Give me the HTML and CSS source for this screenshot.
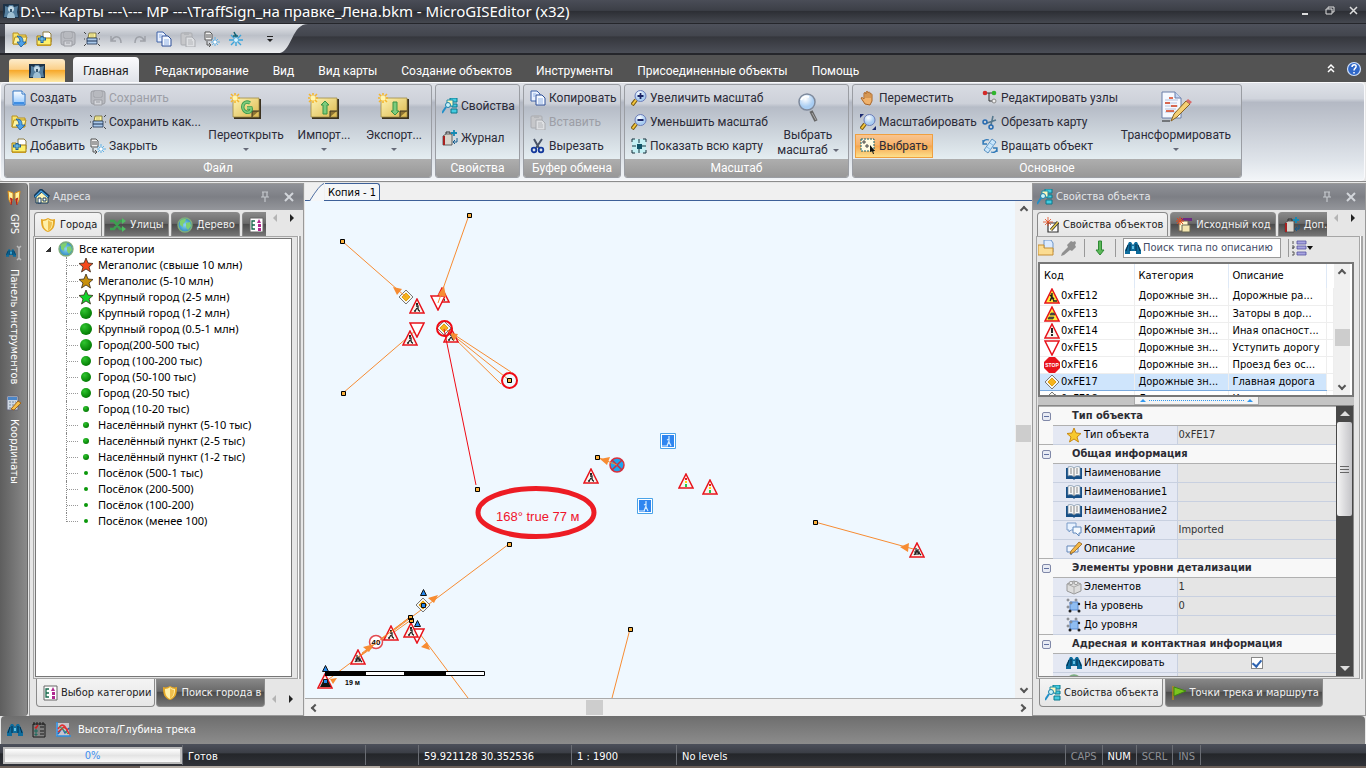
FILE: index.html
```html
<!DOCTYPE html>
<html lang="ru">
<head>
    <meta charset="UTF-8">
    <meta name="viewport" content="width=device-width, initial-scale=1.0">
    <title>MicroGISEditor</title>
    <link rel="stylesheet" href="styles.css">
</head>
<body>
    <!-- icon set -->
    <svg class="defs" aria-hidden="true">
        <defs>
            <linearGradient id="blueDoc" x1="0" y1="0" x2="0" y2="1"><stop offset="0" stop-color="#fff"/><stop offset="1" stop-color="#8cc4ff"/></linearGradient>
            <linearGradient id="noteFill" x1="0" y1="0" x2="1" y2="1"><stop offset="0" stop-color="#fdf3b4"/><stop offset="1" stop-color="#dcb94e"/></linearGradient>
            <radialGradient id="glass" cx=".4" cy=".3"><stop offset="0" stop-color="#fff"/><stop offset="1" stop-color="#a9cdf2"/></radialGradient>
            <radialGradient id="globeFill" cx=".5" cy=".5"><stop offset="0" stop-color="#8fd6f2"/><stop offset="1" stop-color="#2f8bc0"/></radialGradient>
        </defs>
        <symbol id="i-logo" viewBox="0 0 16 16"><path fill="#1d3247" d="M0 1h16v14H0z"/><path fill="#557f9f" d="M2 3l3 1 1-2h4l1 2 4-1-1 6 1 5H1l1-5z"/><circle cx="8" cy="6" r="3" fill="#c5dbe8"/><path fill="#9fc0d4" d="M4 15c0-8 8-8 8 0z"/><path fill="#35546c" d="M7 6h2v3H7z"/></symbol>
        <symbol id="i-open" viewBox="0 0 16 16"><path d="M1 13V2h5l1 2h7v9z" fill="#f7e36a" stroke="#b8901c"/><path d="M3 6h12l-2 7H1z" fill="#fdf4a0" stroke="#b8901c"/><path d="M5 5c5 0 6 2 6 6h3l-5 5-4-5h3c0-3-1-4-3-6z" fill="#4ea1e8" stroke="#155a9c" stroke-width=".8"/></symbol>
        <symbol id="i-add" viewBox="0 0 16 16"><path d="M7 1h6l2 2v8H7z" fill="#fff" stroke="#8c7c40"/><path d="M1 14V5h4l1 2h9v7z" fill="#fdf06b" stroke="#a37b10"/><path d="M6 5v7M2 8h8" stroke="#1c5c98" stroke-width="3"/><path d="M6 6v5M3 8h6" stroke="#7fd4f4"/><path d="M1 14h14v1H1z" fill="#c79a20"/></symbol>
        <symbol id="i-save" viewBox="0 0 16 16"><rect x="1" y="1" width="14" height="13" rx="2" fill="#b9bbc1" stroke="#9b9da3"/><path d="M4 1h8v6H4zM4 10h8v5H4z" fill="#d3d5da" stroke="#9b9da3"/><path d="M5 3h6M5 5h6M6 12h4" stroke="#9b9da3"/></symbol>
        <symbol id="i-saveas" viewBox="0 0 16 16"><path d="M0 1l2 2M16 1l-2 2M0 15l2-2M16 15l-2-2M0 8h1M15 8h1" stroke="#222" stroke-width=".8"/><path d="M5 2h7v5H4z" fill="#fdf49a" stroke="#6d6432" stroke-width=".8"/><path d="M3 7h10v6H3z" fill="#a9c8ea" stroke="#1c3050" stroke-width=".8"/><path d="M3 10h10" stroke="#1c3050"/><path d="M6 4h4M6 6h4" stroke="#a49a60" stroke-width=".6"/></symbol>
        <symbol id="i-undo" viewBox="0 0 16 16"><path d="M3 5v5h5M4 9c3-5 9-4 9 3" fill="none" stroke="#9ea1a8" stroke-width="1.500"/></symbol>
        <symbol id="i-redo" viewBox="0 0 16 16"><path d="M13 5v5H8M12 9c-3-5-9-4-9 3" fill="none" stroke="#9ea1a8" stroke-width="1.500"/></symbol>
        <symbol id="i-copy" viewBox="0 0 16 16"><path d="M1 1h6l3 3v7H1z" fill="#e9f1ff" stroke="#3e62a8"/><path d="M6 5h6l3 3v7H6z" fill="#f5f9ff" stroke="#2c4f98"/><path d="M3 4h3M3 6h2M8 9h5M8 11h5M8 13h5" stroke="#8fb0e4"/></symbol>
        <symbol id="i-paste" viewBox="0 0 16 16"><rect x="1" y="2" width="11" height="12" rx="1" fill="#c6c7ca" stroke="#a9abb0"/><path d="M4 1h5v3H4z" fill="#b4b6ba"/><path d="M6 6h6l3 3v7H6z" fill="#dddfe2" stroke="#a9abb0"/><path d="M8 9h4M8 11h5M8 13h5" stroke="#b4b6ba"/></symbol>
        <symbol id="i-snow" viewBox="0 0 16 16"><path d="M8 3v12M1 9h14M3 4l10 10M13 4L3 14" stroke="#3aa5dc" stroke-width="1.400"/><circle cx="8" cy="9" r="2" fill="#d8f4ff"/><path d="M6 1l2 4M5 5h5" stroke="#14606e" stroke-width="1.500"/></symbol>
        <symbol id="i-closedoc" viewBox="0 0 16 16"><path d="M1 1h5l2 2v6H1z" fill="#f2f2f2" stroke="#555"/><path d="M2 4h5M2 6h5M3 10v4h4M5 12l2 2-2 2" stroke="#555" fill="none"/><path d="M11 6v9M7 11h9M8 8l6 6M14 8l-6 6" stroke="#62b2e6"/><circle cx="11" cy="11" r="1.500" fill="#fff"/></symbol>
        <symbol id="i-new" viewBox="0 0 16 16"><path d="M2 1h9l3 3v11H2z" fill="url(#blueDoc)" stroke="#2e74c4"/><path d="M11 1v3h3" fill="#fff" stroke="#2e74c4"/><path d="M3 13h10" stroke="#3e8ee4" stroke-width="2"/></symbol>
        <symbol id="i-note" viewBox="0 0 32 32"><path d="M4 8h27v20H4z" fill="#3a3120"/><path d="M3 7h26v19H3z" fill="url(#noteFill)" stroke="#a08b45" stroke-width=".8"/><path d="M22 26v-6h7" fill="#8d7433" stroke="#3a3120"/><path d="M5 2v10M0 7h10M1 3l8 8M9 3L1 11" stroke="#f5b52c" stroke-width="1.500"/><circle cx="5" cy="7" r="2.500" fill="#fff6b0"/></symbol>
        <symbol id="i-reopen" viewBox="0 0 32 32"><use href="#i-note" width="32" height="32"/><path d="M20 12c-7-4-10 6-4 9 3 1 6-1 5-4h-4" fill="none" stroke="#3b9a4d" stroke-width="3.500"/><path d="M20 12c-7-4-10 6-4 9 3 1 6-1 5-4h-4" fill="none" stroke="#7ccb7c" stroke-width="1.800"/></symbol>
        <symbol id="i-import" viewBox="0 0 32 32"><use href="#i-note" width="32" height="32"/><path d="M17 10l4 4h-2v9h-4v-9h-2z" fill="#7ccb7c" stroke="#3a9345"/></symbol>
        <symbol id="i-export" viewBox="0 0 32 32"><use href="#i-note" width="32" height="32"/><path d="M17 24l4-4h-2v-9h-4v9h-2z" fill="#7ccb7c" stroke="#3a9345"/></symbol>
        <symbol id="i-props" viewBox="0 0 16 16"><path d="M8 0h7v4H8zM10 6h5v3h-5zM9 11h6v4H9z" fill="#45cbe0" stroke="#0a788c"/><path d="M5 2h6v6H5z" fill="#fff7bc" stroke="#1c8fa8"/><circle cx="6" cy="7" r="2.500" fill="#c9f2fa" stroke="#1c7fa8"/><path d="M4 9l-4 6" stroke="#218fc8" stroke-width="2"/></symbol>
        <symbol id="i-journal" viewBox="0 0 16 16"><path d="M1 6l3-2h6v11H1z" fill="#d8d4cc" stroke="#444" stroke-width=".8"/><path d="M1 6h2v9H1z" fill="#a82020"/><path d="M4 4V2h4v2" fill="none" stroke="#333"/><path d="M12 0v6M9 3h6" stroke="#158ab4" stroke-width="1.800"/><path d="M15 8v4h-4M13 10l-2 2 2 2" fill="none" stroke="#125a8c"/></symbol>
        <symbol id="i-cut" viewBox="0 0 16 16"><path d="M4 1l5 9M12 1L6 10" stroke="#4a5468" stroke-width="2"/><circle cx="4" cy="12" r="2.300" fill="none" stroke="#12389c" stroke-width="1.800"/><circle cx="11" cy="12" r="2.300" fill="none" stroke="#12389c" stroke-width="1.800"/></symbol>
        <symbol id="i-lens" viewBox="0 0 16 16"><path d="M5 10l-4 5" stroke="#7a5a10" stroke-width="4"/><path d="M5 10l-3.500 4.500" stroke="#f4c73c" stroke-width="2"/><circle cx="9.500" cy="6" r="5.500" fill="url(#glass)" stroke="#6c7cb8"/></symbol>
        <symbol id="i-zoomin" viewBox="0 0 16 16"><use href="#i-lens" width="16" height="16"/><path d="M9.500 3v6M6.500 6h6" stroke="#1a2466" stroke-width="1.800"/></symbol>
        <symbol id="i-zoomout" viewBox="0 0 16 16"><use href="#i-lens" width="16" height="16"/><path d="M6.500 6h6" stroke="#1a2466" stroke-width="1.800"/></symbol>
        <symbol id="i-fit" viewBox="0 0 16 16"><path fill="#c4f0f4" d="M1 1h14v14H1z"/><path d="M1 4V1h3M12 1h3v3M15 12v3h-3M4 15H1v-3M8 1v4M8 11v4M1 8h4M11 8h4" stroke="#14303c" fill="none"/><path d="M6 6h5v5H6z" fill="#0d5468"/></symbol>
        <symbol id="i-biglens" viewBox="0 0 32 32"><path d="M19 20l5 10" stroke="#666" stroke-width="3.500"/><path d="M20 22l4 7" stroke="#aaa"/><circle cx="15" cy="11" r="8" fill="url(#glass)" stroke="#7f8a9c" stroke-width="1.500"/><path d="M9 9c2-4 6-4 8-3" fill="none" stroke="#fff" stroke-width="2"/></symbol>
        <symbol id="i-hand" viewBox="0 0 16 16"><path d="M5 14L1 8c1-1 2 0 3 1V3c1-1 2 0 2 1V2c1-1 2-1 2 1 1-2 2-1 2 1 1-1 2 0 2 1v6l-2 4z" fill="#f0b26c" stroke="#a86427"/><path d="M6 4v4M8 3v5M10 4v4" stroke="#a86427" stroke-width=".7"/></symbol>
        <symbol id="i-scale" viewBox="0 0 16 16"><path d="M0 0h4L0 4zM16 16h-4l4-4z" fill="#1b2a70"/><use href="#i-lens" width="16" height="16"/></symbol>
        <symbol id="i-select" viewBox="0 0 16 16"><path d="M1 1h13v12H1z" fill="#fffbe2" stroke="#14606e" stroke-dasharray="2 1"/><path d="M3 3h2v2H3zM6 7h2v2H6z" fill="none" stroke="#444"/><path d="M10 7l5 6-2 0 1 3-1 0-1-3-2 1z" fill="#111"/></symbol>
        <symbol id="i-nodes" viewBox="0 0 16 16"><path d="M4 3h7M7 3v8h4" fill="none" stroke="#333"/><circle cx="3" cy="3" r="2.300" fill="#d32a2a"/><circle cx="12" cy="3" r="2.300" fill="#2fb52f"/><circle cx="12" cy="11" r="2" fill="#eee" stroke="#888"/></symbol>
        <symbol id="i-crop" viewBox="0 0 16 16"><path d="M5 9l9-3M9 11l2-9" stroke="#55788e" stroke-width="1.600"/><circle cx="3" cy="8" r="2" fill="none" stroke="#256ab0" stroke-width="1.500"/><circle cx="9" cy="13" r="2" fill="none" stroke="#256ab0" stroke-width="1.500"/></symbol>
        <symbol id="i-rotate" viewBox="0 0 16 16"><path d="M10 1l4 3-8 11-4-3z" fill="#c9e6fb" stroke="#3b7bb4" stroke-width=".8"/><path d="M5 9l4 3M8 5l4 3" stroke="#7db4e0"/><path d="M1 6c0-4 3-5 6-4M15 10c0 4-3 5-6 4M1 2v4h4M15 14v-4h-4" fill="none" stroke="#2f79b8" stroke-width="1.300"/></symbol>
        <symbol id="i-transform" viewBox="0 0 32 32"><path d="M2 1h13l6 6v20H2z" fill="#f6f9ff" stroke="#6a7ea8"/><path d="M15 1v6h6" fill="#c5d6f2" stroke="#6a7ea8"/><path d="M5 9h13M5 12h12M5 15h13M5 18h11M5 21h13" stroke="#b4c2de"/><path d="M9 7h4M5 12h5M11 15h6M6 20h8" stroke="#d8401c" stroke-width="1.300"/><path d="M14 23L26 10l4 3-13 13-6 4z" fill="#f5cf74" stroke="#866022"/><path d="M26 10l2-2 4 3-2 2z" fill="#d76a6a"/><path d="M2 30h8" stroke="#222"/></symbol>
        <symbol id="i-help" viewBox="0 0 16 16"><circle cx="8" cy="8" r="6.500" fill="#2f67c8" stroke="#cfe0fa" stroke-width="1.200"/><path d="M6 6c0-3 5-3 4 0-.5 1.500-2 1.500-2 3.500M8 11v1.500" fill="none" stroke="#fff" stroke-width="1.500"/></symbol>
        <symbol id="i-house" viewBox="0 0 16 16"><path d="M2 8v6h12V8L8 3z" fill="#fff6b6" stroke="#143a5c"/><path d="M0 8l7-7 8 7" fill="none" stroke="#143a5c" stroke-width="3"/><path d="M1 8l6-6 7 6" fill="none" stroke="#48a7e8" stroke-width="1.200"/><path d="M4 9h3v5H4zM9 9h3v3H9z" fill="#fff" stroke="#143a5c"/></symbol>
        <symbol id="i-shield" viewBox="0 0 16 16"><path d="M1 2c3 1 5 0 7-1 2 1 4 2 7 1 0 7-1 11-7 13C2 13 1 9 1 2z" fill="#e5a827"/><path d="M3 4c2 0 4-1 5-2 1 1 3 2 5 2 0 5-1 8-5 10-4-2-5-5-5-10z" fill="#fff0a8"/><path d="M8 3v11c3-2 4-5 4-9-1 0-3-1-4-2z" fill="#efc04e"/></symbol>
        <symbol id="i-shuffle" viewBox="0 0 16 16"><path d="M0 4h4l6 8h3M0 12h4l6-8h3" fill="none" stroke="#3c9f50" stroke-width="2.600"/><path d="M12 1l4 3-4 3zM12 9l4 3-4 3z" fill="#4fbd62"/></symbol>
        <symbol id="i-globe" viewBox="0 0 16 16"><circle cx="8" cy="8" r="7" fill="url(#globeFill)" stroke="#7fae7c" stroke-width="1.400"/><path d="M3 4c2-2 4-2 6-2l-1 3-2 2v3l-3-2zM9 6l4-1 1 4-3 4-2-3z" fill="#7fd070"/></symbol>
        <symbol id="i-cat" viewBox="0 0 16 16"><path d="M2 1h13v14H2z" fill="#fff" stroke="#666"/><path d="M7 4H4v8h3M4 8h3" fill="none" stroke="#176a4c" stroke-width="1.300"/><path d="M9 6l2-4 2 4zM10 7h3v3h-3zM10 11h3v3h-3z" fill="#b02a90"/></symbol>
        <symbol id="i-binoc" viewBox="0 0 16 16"><path d="M4 2h2l2 3 2-3h2l4 8v4h-5v-3H5v3H0v-4z" fill="#0e6c9c"/><path d="M3 5l-2 6M5 4v7M13 5l2 6M11 4v7" stroke="#052f4c"/><path d="M7 6h2v3H7z" fill="#64c0e4"/></symbol>
        <symbol id="i-starlet" viewBox="0 0 16 16"><path d="M8 1l2 5 5 .5-4 3.500 1.500 5L8 12l-4.500 3L5 10 1 6.500 6 6z" stroke="#3a2c1a" stroke-width=".8"/></symbol>
        <symbol id="i-star" viewBox="0 0 16 16"><path d="M8 1l2 5 5 .5-4 3.500 1.500 5L8 12l-4.500 3L5 10 1 6.500 6 6z" fill="#f7c92e" stroke="#c98a14"/></symbol>
        <symbol id="i-book" viewBox="0 0 16 16"><path d="M0 3h16v11H9l-1 1-1-1H0z" fill="#164f86"/><path d="M2 2c3-1 5 0 6 1 1-1 3-2 6-1v9c-3-1-5 0-6 1-1-1-3-2-6-1z" fill="#f7f7f7" stroke="#6d87a0" stroke-width=".7"/><path d="M8 3v9M4 4h2M4 6h2M4 8h2M10 4h2M10 6h2M10 8h2" stroke="#888"/></symbol>
        <symbol id="i-comment" viewBox="0 0 16 16"><path d="M1 1h9v7H5l-2 2V8H1z" fill="#e8f2ff" stroke="#7a9cc8"/><path d="M7 5h8v6h-2v3l-3-3H7z" fill="#f5faff" stroke="#5f88bc"/></symbol>
        <symbol id="i-descr" viewBox="0 0 16 16"><path d="M1 5h11v6H7l-2 3v-3H1z" fill="#f0f6ff" stroke="#6487b8"/><path d="M5 10L13 1l3 2-8 8-4 2z" fill="#f4b847" stroke="#94611a" stroke-width=".8"/></symbol>
        <symbol id="i-brick" viewBox="0 0 16 16"><path d="M1 5l7-3 7 3v7l-7 3-7-3z" fill="#ddd" stroke="#999"/><path d="M1 5l7 3 7-3M8 8v7" fill="none" stroke="#aaa"/><ellipse cx="5" cy="4" rx="2" ry="1.500" fill="#f3f3f3" stroke="#999"/><ellipse cx="10" cy="4" rx="2" ry="1.500" fill="#f3f3f3" stroke="#999"/></symbol>
        <symbol id="i-level" viewBox="0 0 16 16"><path d="M4 4h8v8H4z" fill="#8fbdf2" stroke="#5a8ad0"/><g fill="#dce6f6" stroke="#555" stroke-width=".7"><circle cx="2" cy="2" r="1"/><circle cx="10" cy="2" r="1"/><circle cx="2" cy="9" r="1"/><circle cx="5" cy="5" r="1"/></g><g fill="#222"><circle cx="4" cy="13" r="1.500"/><circle cx="13" cy="13" r="1.500"/><circle cx="13" cy="6" r="1.200"/></g></symbol>
        <symbol id="i-folder" viewBox="0 0 16 16"><path d="M6 0h7l2 3v9H6z" fill="#dcebff" stroke="#6a94c8"/><path d="M0 5h6v3h9v7H0z" fill="#fbdc92" stroke="#c48d32"/></symbol>
        <symbol id="i-plug" viewBox="0 0 16 16"><path d="M0 16l1-3 6-6-1-2 4-4 2 1 2-1 1 2-1 2 1 2-4 4-2-1-6 5z" fill="#909090"/></symbol>
        <symbol id="i-down" viewBox="0 0 16 16"><path d="M8 15l4-5H9.500V1h-3v9H4z" fill="#5db85a" stroke="#2f8b35"/></symbol>
        <symbol id="i-sort" viewBox="0 0 24 16"><path d="M2 1v3M1 6h2v2H1h2M1 12h2v3H1" fill="none" stroke="#555"/><path d="M6 1h9v3H6zM6 6h9v3H6zM6 12h9v3H6z" fill="#a8a5e0" stroke="#5450a0" stroke-width=".8"/><path d="M16 6h6l-3 4z" fill="#111"/></symbol>
        <symbol id="i-edit" viewBox="0 0 16 16"><path d="M5 6h10v9H5z" fill="#fff" stroke="#333" stroke-width="1.200"/><path d="M8 13l7-8" stroke="#333" stroke-width="3"/><path d="M8 13l7-8" stroke="#e8cc4c" stroke-width="1.500"/><path d="M5 0v9M0 5h10M2 2l6 6M8 2L2 8" stroke="#e2491c" stroke-width=".8"/></symbol>
        <symbol id="i-source" viewBox="0 0 16 16"><path d="M5 1h11v3H5z" fill="#6a2b80"/><path d="M3 4h9v10H3z" fill="#fff8cc" stroke="#765"/><path d="M6 8h8v7H6z" fill="#f4e6b0" stroke="#665"/><path d="M4 0v8M0 4h8M1 1l6 6M7 1L1 7" stroke="#e2491c"/></symbol>
        <symbol id="i-flag" viewBox="0 0 16 16"><path d="M2 1v14" stroke="#b38b1c" stroke-width="1.500"/><path d="M3 2l12 4-12 5z" fill="#7bc51f" stroke="#3f8a10"/></symbol>
        <symbol id="i-notes" viewBox="0 0 16 16"><path d="M2 2h12v13H2z" fill="none" stroke="#1a1a1a"/><path d="M3 0v3M6 0v3M9 0v3M12 0v3M9 5h4M9 9h4M9 12h4" stroke="#1a1a1a"/><path d="M4 5l1 1 2-3" stroke="#d02020" fill="none" stroke-width="1.500"/><path d="M4 8h2v2H4zM4 12h2v1H4z" fill="none" stroke="#176a5c"/></symbol>
        <symbol id="i-graph" viewBox="0 0 16 16"><path d="M1 1h13v13H1z" fill="#c9c4cc"/><path d="M2 0v14h14" fill="none" stroke="#2c8fe0" stroke-width="1.600"/><path d="M3 12l4-6 3 5 4-5" stroke="#2464b8" fill="none" stroke-width="1.400"/><path d="M3 7c4-7 7-4 11 5M3 10l6-5 4 3" stroke="#e03131" fill="none" stroke-width="1.600"/><path d="M4 4l9 8" stroke="#44a844"/></symbol>
        <symbol id="i-gps" viewBox="0 0 16 16"><path d="M2 1l5 2v5l-2 6-2-4zM14 1L9 3v5l2 6 2-4z" fill="#fff3a0" stroke="#d88a18"/><path d="M4 8l2 1-1 6M12 8l-2 1 1 6" fill="#c92222" stroke="#b01c1c"/></symbol>
        <symbol id="i-tools" viewBox="0 0 16 16"><use href="#i-binoc" width="10" height="16"/><path d="M11 1l2 2 2-2M13 3v10M11 15l2-2 2 2" fill="none" stroke="#bbb" stroke-width="1.500"/></symbol>
        <symbol id="i-calc" viewBox="0 0 16 16"><path d="M1 1h11v14H1z" fill="#cfd8e4" stroke="#667"/><path d="M2 2h9v3H2z" fill="#4c86c8"/><path d="M3 7h7M3 10h7M3 13h7" stroke="#789" stroke-dasharray="2 1"/><path d="M5 14l7-8 3 2-7 7z" fill="#f6c04c" stroke="#a0651c"/></symbol>
        <!-- road signs -->
        <symbol id="s-tri" viewBox="0 0 16 16"><path d="M8 1l7 14H1z" fill="#f7f4ee" stroke="#e8141c" stroke-width="1.500"/></symbol>
        <symbol id="s-ped" viewBox="0 0 16 16"><use href="#s-tri" width="16" height="16"/><path d="M8 5v2" stroke="#222" stroke-width="2"/><path d="M7 8h2v3l1 2M8 10l-2 3M5 13h2M10 13h1" fill="none" stroke="#222" stroke-width="1.300"/></symbol>
        <symbol id="s-kids" viewBox="0 0 16 16"><use href="#s-tri" width="16" height="16"/><path d="M7 6v7M9 7v6M5 13l3-4 4 4M5 10h6" stroke="#222" fill="none" stroke-width="1.200"/></symbol>
        <symbol id="s-light" viewBox="0 0 16 16"><use href="#s-tri" width="16" height="16"/><path d="M7 5h2v2H7z" fill="#e41c1c"/><path d="M7 8h2v2H7z" fill="#ffd80c"/><path d="M7 11h2v3H7z" fill="#20c850"/></symbol>
        <symbol id="s-work" viewBox="0 0 16 16"><path d="M8 1l7 14H1z" fill="#ffe83a" stroke="#e8141c" stroke-width="1.500"/><path d="M8 5v4l-2 4M8 9l2 4M6 7l4 4M9 13h4" stroke="#222" stroke-width="1.400"/></symbol>
        <symbol id="s-jam" viewBox="0 0 16 16"><path d="M8 1l7 14H1z" fill="#ffe83a" stroke="#e8141c" stroke-width="1.500"/><path d="M7 7h3l1 2H6zM5 11h5l-1 2H4z" fill="#555" stroke="#222" stroke-width=".6"/></symbol>
        <symbol id="s-danger" viewBox="0 0 16 16"><use href="#s-tri" width="16" height="16"/><path d="M8 5v5M8 11v2" stroke="#111" stroke-width="1.800"/></symbol>
        <symbol id="s-yield" viewBox="0 0 16 16"><path d="M1 1h14L8 15z" fill="#fff" stroke="#e8141c" stroke-width="1.500"/></symbol>
        <symbol id="s-main" viewBox="0 0 16 16"><path d="M8 1l7 7-7 7-7-7z" fill="#f4f4ee" stroke="#777"/><path d="M8 4l4 4-4 4-4-4z" fill="#f5b41c" stroke="#e0a010"/></symbol>
        <symbol id="s-mainend" viewBox="0 0 16 16"><use href="#s-main" width="16" height="16"/><path d="M4 12l8-8" stroke="#222" stroke-width="2"/></symbol>
        <symbol id="s-cross" viewBox="0 0 16 16"><path d="M.5.5h15v15H.5z" fill="#fff" stroke="#4aa3e8"/><path d="M2 2h12v12H2z" fill="#2f86f0"/><path d="M9 3v2M9 6l-2 1M9 5v4l2 4M9 8l-2 5M2 13h6" stroke="#d4ecff" fill="none" stroke-width="1.200"/></symbol>
        <symbol id="s-nostop" viewBox="0 0 16 16"><circle cx="8" cy="8" r="7" fill="#1ba5f0" stroke="#d8303c" stroke-width="1.500"/><path d="M3 3l10 10M13 3L3 13" stroke="#c8303c" stroke-width="1.500"/></symbol>
    </svg>

    <header class="titlebar">
        <svg class="ico"><use href="#i-logo"/></svg>
        <h1>D:\--- Карты ---\--- MP ---\TraffSign_на правке_Лена.bkm - MicroGISEditor (x32)</h1>
        <div class="window-buttons">
            <button aria-label="Свернуть"><svg viewBox="0 0 10 10"><path d="M1 8h6" stroke="#ddd" stroke-width="2"/></svg></button>
            <button aria-label="Восстановить"><svg viewBox="0 0 10 10"><path d="M3 3V1h6v5H7M1 3h6v5H1z" fill="none" stroke="#ddd"/></svg></button>
            <button aria-label="Закрыть окно"><svg viewBox="0 0 10 10"><path d="M1 1l7 7M8 1L1 8" stroke="#ddd" stroke-width="1.500"/></svg></button>
        </div>
    </header>

    <div class="quickbar">
        <div class="quick-tools">
            <button aria-label="Открыть"><svg class="ico"><use href="#i-open"/></svg></button>
            <button aria-label="Добавить"><svg class="ico"><use href="#i-add"/></svg></button>
            <button aria-label="Сохранить" disabled><svg class="ico"><use href="#i-save"/></svg></button>
            <button aria-label="Сохранить как"><svg class="ico"><use href="#i-saveas"/></svg></button>
            <button aria-label="Отменить" disabled><svg class="ico"><use href="#i-undo"/></svg></button>
            <button aria-label="Вернуть" disabled><svg class="ico"><use href="#i-redo"/></svg></button>
            <button aria-label="Копировать"><svg class="ico"><use href="#i-copy"/></svg></button>
            <button aria-label="Вставить" disabled><svg class="ico"><use href="#i-paste"/></svg></button>
            <button aria-label="Закрыть"><svg class="ico"><use href="#i-closedoc"/></svg></button>
            <button aria-label="Обновить"><svg class="ico"><use href="#i-snow"/></svg></button>
            <button class="quick-more" aria-label="Настройка"><svg class="ico" viewBox="0 0 16 16"><path d="M5 5h6v1H5z" fill="#222"/><path d="M5 8h6l-3 3z" fill="#222"/></svg></button>
        </div>
        <svg class="quick-curve" viewBox="0 0 30 29" preserveAspectRatio="none">
            <defs><linearGradient id="quickFill" x1="0" y1="0" x2="0" y2="1"><stop offset="0" stop-color="#e4e6ea"/><stop offset=".4" stop-color="#bcc0c8"/><stop offset="1" stop-color="#eceef0"/></linearGradient></defs>
            <path d="M0 0h30C14 0 14 26 2 29H0z" fill="url(#quickFill)"/>
        </svg>
    </div>

    <nav class="ribbon-tabs">
        <button class="app-button" aria-label="Меню"><svg class="ico"><use href="#i-logo"/></svg></button>
        <button class="tab active">Главная</button>
        <button class="tab">Редактирование</button>
        <button class="tab">Вид</button>
        <button class="tab">Вид карты</button>
        <button class="tab">Создание объектов</button>
        <button class="tab">Инструменты</button>
        <button class="tab">Присоединенные объекты</button>
        <button class="tab">Помощь</button>
        <div class="ribbon-right">
            <button aria-label="Свернуть ленту"><svg class="ico" viewBox="0 0 16 16"><path d="M5 7l3-3 3 3M5 11l3-3 3 3" fill="none" stroke="#fff" stroke-width="1.500"/></svg></button>
            <button aria-label="Справка"><svg class="ico"><use href="#i-help"/></svg></button>
        </div>
    </nav>

    <section class="ribbon">
        <div class="group g-file">
            <div class="group-body">
                <div class="col c-new">
                    <button><svg class="ico"><use href="#i-new"/></svg>Создать</button>
                    <button><svg class="ico"><use href="#i-open"/></svg>Открыть</button>
                    <button><svg class="ico"><use href="#i-add"/></svg>Добавить</button>
                </div>
                <div class="col c-save">
                    <button disabled><svg class="ico"><use href="#i-save"/></svg>Сохранить</button>
                    <button><svg class="ico"><use href="#i-saveas"/></svg>Сохранить как...</button>
                    <button><svg class="ico"><use href="#i-closedoc"/></svg>Закрыть</button>
                </div>
                <button class="big w84"><svg><use href="#i-reopen"/></svg>Переоткрыть<i class="caret"></i></button>
                <button class="big w72"><svg><use href="#i-import"/></svg>Импорт...<i class="caret"></i></button>
                <button class="big w68"><svg><use href="#i-export"/></svg>Экспорт...<i class="caret"></i></button>
            </div>
            <div class="group-name">Файл</div>
        </div>
        <div class="group g-props">
            <div class="group-body">
                <div class="col two">
                    <button><svg class="ico"><use href="#i-props"/></svg>Свойства</button>
                    <button><svg class="ico"><use href="#i-journal"/></svg>Журнал</button>
                </div>
            </div>
            <div class="group-name">Свойства</div>
        </div>
        <div class="group g-clip">
            <div class="group-body">
                <div class="col">
                    <button><svg class="ico"><use href="#i-copy"/></svg>Копировать</button>
                    <button disabled><svg class="ico"><use href="#i-paste"/></svg>Вставить</button>
                    <button><svg class="ico"><use href="#i-cut"/></svg>Вырезать</button>
                </div>
            </div>
            <div class="group-name">Буфер обмена</div>
        </div>
        <div class="group g-zoom">
            <div class="group-body">
                <div class="col c-zoom">
                    <button><svg class="ico"><use href="#i-zoomin"/></svg>Увеличить масштаб</button>
                    <button><svg class="ico"><use href="#i-zoomout"/></svg>Уменьшить масштаб</button>
                    <button><svg class="ico"><use href="#i-fit"/></svg>Показать всю карту</button>
                </div>
                <button class="big w72"><svg><use href="#i-biglens"/></svg>Выбрать<span class="second">масштаб <i class="caret"></i></span></button>
            </div>
            <div class="group-name">Масштаб</div>
        </div>
        <div class="group g-main">
            <div class="group-body">
                <div class="col c-move">
                    <button><svg class="ico"><use href="#i-hand"/></svg>Переместить</button>
                    <button><svg class="ico"><use href="#i-scale"/></svg>Масштабировать</button>
                    <button class="pressed"><svg class="ico"><use href="#i-select"/></svg>Выбрать</button>
                </div>
                <div class="col c-edit">
                    <button><svg class="ico"><use href="#i-nodes"/></svg>Редактировать узлы</button>
                    <button><svg class="ico"><use href="#i-crop"/></svg>Обрезать карту</button>
                    <button><svg class="ico"><use href="#i-rotate"/></svg>Вращать объект</button>
                </div>
                <button class="big w120"><svg><use href="#i-transform"/></svg>Трансформировать<i class="caret"></i></button>
            </div>
            <div class="group-name">Основное</div>
        </div>
    </section>

    <main class="workspace">
        <aside class="rail">
            <button><svg class="ico"><use href="#i-gps"/></svg><span>GPS</span></button>
            <button><svg class="ico"><use href="#i-tools"/></svg><span>Панель инструментов</span></button>
            <button><svg class="ico"><use href="#i-calc"/></svg><span>Координаты</span></button>
        </aside>

        <section class="dock dock-left">
            <header class="dock-head"><svg class="ico"><use href="#i-house"/></svg><h2>Адреса</h2>
                <button aria-label="Закрепить"><svg viewBox="0 0 12 12"><path d="M3 1h6M4 1v5M8 1v5M2 6h8M6 6v5" fill="none" stroke="#c4c7cc" stroke-width="1.200"/></svg></button>
                <button aria-label="Закрыть"><svg viewBox="0 0 12 12"><path d="M2 2l8 8M10 2l-8 8" stroke="#d2d5da" stroke-width="2"/></svg></button>
            </header>
            <div class="dock-tabs">
                <div class="tabs-clip">
                    <button class="dtab on"><svg class="ico"><use href="#i-shield"/></svg>Города</button>
                    <button class="dtab"><svg class="ico"><use href="#i-shuffle"/></svg>Улицы</button>
                    <button class="dtab"><svg class="ico"><use href="#i-globe"/></svg>Дерево</button>
                    <button class="dtab" aria-label="Категории"><svg class="ico"><use href="#i-cat"/></svg></button>
                </div>
                <button class="arrow off" aria-label="Назад"></button><button class="arrow next" aria-label="Вперед"></button>
            </div>
            <div class="dock-page">
                <div class="tree">
                    <div class="tree-root"><i class="expander"></i><svg class="ico"><use href="#i-globe"/></svg>Все категории</div>
                    <ul>
                        <li><svg class="ico red"><use href="#i-starlet"/></svg>Мегаполис (свыше 10 млн)</li>
                        <li><svg class="ico gold"><use href="#i-starlet"/></svg>Мегаполис (5-10 млн)</li>
                        <li><svg class="ico green"><use href="#i-starlet"/></svg>Крупный город (2-5 млн)</li>
                        <li><i class="ball b12"></i>Крупный город (1-2 млн)</li>
                        <li><i class="ball b12"></i>Крупный город (0.5-1 млн)</li>
                        <li><i class="ball b12"></i>Город(200-500 тыс)</li>
                        <li><i class="ball b10"></i>Город (100-200 тыс)</li>
                        <li><i class="ball b10"></i>Город (50-100 тыс)</li>
                        <li><i class="ball b10"></i>Город (20-50 тыс)</li>
                        <li><i class="ball b6"></i>Город (10-20 тыс)</li>
                        <li><i class="ball b6"></i>Населённый пункт (5-10 тыс)</li>
                        <li><i class="ball b6"></i>Населённый пункт (2-5 тыс)</li>
                        <li><i class="ball b6"></i>Населённый пункт (1-2 тыс)</li>
                        <li><i class="ball b4"></i>Посёлок (500-1 тыс)</li>
                        <li><i class="ball b4"></i>Посёлок (200-500)</li>
                        <li><i class="ball b4"></i>Посёлок (100-200)</li>
                        <li><i class="ball b4"></i>Посёлок (менее 100)</li>
                    </ul>
                </div>
            </div>
            <div class="dock-tabs bottom">
                <div class="tabs-clip">
                    <button class="dtab on"><svg class="ico"><use href="#i-cat"/></svg>Выбор категории</button>
                    <button class="dtab"><svg class="ico"><use href="#i-shield"/></svg>Поиск города в</button>
                </div>
                <button class="arrow off" aria-label="Назад"></button><button class="arrow next" aria-label="Вперед"></button>
            </div>
        </section>

        <section class="center">
            <div class="doc-tabs">
                <svg viewBox="0 0 20 20"><path d="M4 20Q16 2 20 .5V20z" fill="#f4f6f8"/><path d="M4 20Q15 2 20 .5" fill="none" stroke="#3d6098"/></svg>
                <button>Копия - 1</button>
            </div>
            <div class="map-row">
                <svg class="map">
                    <g transform="translate(-305 -201)">
                        <g stroke="#f78c32" fill="none" stroke-width="1">
                            <path d="M343 393L415 331M444 328L511 372M444 328L509 380M444 328L501 384M815 522L917 550M509 544L325 682M410 617L362 653M411 620L352 662M630 629L612 698M417 630L468 698"/>
                        </g>
                        <use href="#s-main" x="398" y="289" width="16" height="16"/>
                        <use href="#s-ped" x="409" y="298" width="16" height="16"/>
                        <use href="#s-ped" x="434" y="287" width="16" height="16"/>
                        <use href="#s-yield" x="430" y="295" width="16" height="16"/>
                        <use href="#s-yield" x="409" y="322" width="16" height="16"/>
                        <use href="#s-ped" x="402" y="330" width="16" height="16"/>
                        <use href="#s-ped" x="443" y="327" width="16" height="16"/>
                        <use href="#s-main" x="436" y="320" width="16" height="16"/>
                        <use href="#s-ped" x="583" y="468" width="16" height="16"/>
                        <use href="#s-nostop" x="609" y="457" width="16" height="16"/>
                        <use href="#s-cross" x="660" y="433" width="16" height="16"/>
                        <use href="#s-cross" x="637" y="498" width="16" height="16"/>
                        <use href="#s-light" x="678" y="473" width="16" height="16"/>
                        <use href="#s-light" x="702" y="479" width="16" height="16"/>
                        <use href="#s-kids" x="909" y="542" width="16" height="16"/>
                        <use href="#s-kids" x="350" y="649" width="16" height="16"/>
                        <use href="#s-ped" x="383" y="625" width="16" height="16"/>
                        <use href="#s-yield" x="409" y="628" width="16" height="16"/>
                        <use href="#s-ped" x="403" y="622" width="16" height="16"/>
                        <use href="#s-main" x="415" y="597" width="16" height="16"/>
                        <use href="#s-tri" x="317" y="673" width="16" height="16"/>
                        <path d="M320 687h11l-3-6h-5z" fill="#111"/>
                        <circle cx="376" cy="642" r="6.500" fill="#fff" stroke="#e34a50" stroke-width="1.500"/>
                        <text x="376" y="645" text-anchor="middle" class="map-limit">40</text>
                        <g stroke="#f78c32"><path d="M342 241L406 297M469 215L438 303M597 457L617 465M410 617L358 657M444 328L455 336"/></g>
                        <g fill="#f78c32">
                            <path d="M393 287l9 2-5 6zM444 286l2 11-8-2zM450 333l8 1-4 7zM600 459l10-2-3 8zM900 547l9-4-1 9zM438 595l-4 8-6-5zM374 644l-5 8-6-5zM430 650l-9-3 6-5zM330 679l7-1-4 6z"/>
                        </g>
                        <g fill="none" stroke="#f00a14">
                            <circle cx="444.500" cy="328.500" r="7.500" stroke-width="2"/>
                            <circle cx="509.500" cy="380.500" r="7.500" stroke-width="2"/>
                            <path d="M444 329L476 485"/>
                        </g>
                        <g fill="#fbb03b" stroke="#000" stroke-width="1">
                            <path d="M340.500 239.500h4v4h-4zM467.500 213.500h4v4h-4zM341.500 391.500h4v4h-4zM507.500 378.500h4v4h-4zM475.500 487.500h4v4h-4zM595.500 455.500h4v4h-4zM507.500 542.500h4v4h-4zM408.500 615.500h4v4h-4zM409.500 618.500h4v4h-4zM813.500 520.500h4v4h-4zM628.500 627.500h4v4h-4z"/>
                        </g>
                        <g fill="#2489f0" stroke="#111">
                            <path d="M420.500 595.500h6l-3-6zM414.500 626.500h6l-3-6zM322.500 671.500h6l-3-6zM421.500 603.500h4v4h-4zM323.500 679.500h4v4h-4z"/>
                        </g>
                        <path d="M325.500 671.500h159v4h-159z" fill="#fff" stroke="#000"/>
                        <path d="M325 671h41v5h-41zM404 671h42v5h-42z"/>
                        <text x="345" y="685" class="map-scale">19 м</text>
                        <ellipse cx="536" cy="512.500" rx="58" ry="24" fill="none" stroke="#ed1c24" stroke-width="5"/>
                        <text x="496" y="521" class="map-bearing">168° true 77 м</text>
                    </g>
                </svg>
                <div class="vscroll"><i class="up"></i><i class="vthumb"></i><i class="down"></i></div>
            </div>
            <div class="hscroll"><i class="left"></i><i class="hthumb"></i><i class="right"></i></div>
        </section>

        <section class="dock dock-right">
            <header class="dock-head"><svg class="ico"><use href="#i-props"/></svg><h2>Свойства объекта</h2>
                <button aria-label="Закрепить"><svg viewBox="0 0 12 12"><path d="M3 1h6M4 1v5M8 1v5M2 6h8M6 6v5" fill="none" stroke="#c4c7cc" stroke-width="1.200"/></svg></button>
                <button aria-label="Закрыть"><svg viewBox="0 0 12 12"><path d="M2 2l8 8M10 2l-8 8" stroke="#d2d5da" stroke-width="2"/></svg></button>
            </header>
            <div class="dock-tabs">
                <div class="tabs-clip">
                    <button class="dtab on"><svg class="ico"><use href="#i-edit"/></svg>Свойства объектов</button>
                    <button class="dtab"><svg class="ico"><use href="#i-source"/></svg>Исходный код</button>
                    <button class="dtab"><svg class="ico"><use href="#i-journal"/></svg>Доп.</button>
                </div>
                <button class="arrow off" aria-label="Назад"></button><button class="arrow next" aria-label="Вперед"></button>
            </div>
            <div class="dock-page">
                <div class="toolbar">
                    <button aria-label="Папка"><svg class="ico"><use href="#i-folder"/></svg></button>
                    <button aria-label="Подключение" disabled><svg class="ico"><use href="#i-plug"/></svg></button>
                    <i class="sep"></i>
                    <button aria-label="Вниз"><svg class="ico"><use href="#i-down"/></svg></button>
                    <i class="sep"></i>
                    <label class="search"><svg class="ico"><use href="#i-binoc"/></svg><input type="text" placeholder="Поиск типа по описанию" aria-label="Поиск типа по описанию"></label>
                    <i class="sep"></i>
                    <button class="sort" aria-label="Сортировка"><svg><use href="#i-sort"/></svg></button>
                </div>
                <div class="types">
                    <table>
                        <colgroup><col class="k1"><col class="k1"><col class="k2"><col></colgroup>
                        <thead><tr><th>Код</th><th>Категория</th><th>Описание</th><th></th></tr></thead>
                        <tbody>
                            <tr><td><svg class="ico"><use href="#s-work"/></svg>0xFE12</td><td>Дорожные зн...</td><td>Дорожные ра...</td><td></td></tr>
                            <tr><td><svg class="ico"><use href="#s-jam"/></svg>0xFE13</td><td>Дорожные зн...</td><td>Заторы в дор...</td><td></td></tr>
                            <tr><td><svg class="ico"><use href="#s-danger"/></svg>0xFE14</td><td>Дорожные зн...</td><td>Иная опасност...</td><td></td></tr>
                            <tr><td><svg class="ico"><use href="#s-yield"/></svg>0xFE15</td><td>Дорожные зн...</td><td>Уступить дорогу</td><td></td></tr>
                            <tr><td><svg class="ico" viewBox="0 0 16 16"><path d="M5 0h6l5 5v6l-5 5H5l-5-5V5z" fill="#e8141c"/><text x="8" y="10" text-anchor="middle" class="stop">STOP</text></svg>0xFE16</td><td>Дорожные зн...</td><td>Проезд без ос...</td><td></td></tr>
                            <tr class="selected"><td><svg class="ico"><use href="#s-main"/></svg>0xFE17</td><td>Дорожные зн...</td><td>Главная дорога</td><td></td></tr>
                            <tr><td><svg class="ico"><use href="#s-mainend"/></svg>0xFE18</td><td>Дорожные зн...</td><td>Конец главно...</td><td></td></tr>
                        </tbody>
                    </table>
                    <div class="vscroll"><i class="up"></i><i class="vthumb"></i><i class="down"></i></div>
                </div>
                <div class="splitter"><span><i></i></span></div>
                <div class="props">
                    <table>
                        <colgroup><col class="p1"><col class="p2"><col></colgroup>
                        <tbody>
                            <tr class="cat"><th><i class="minus"></i></th><th colspan="2">Тип объекта</th></tr>
                            <tr><td></td><td><svg class="ico"><use href="#i-star"/></svg>Тип объекта</td><td>0xFE17</td></tr>
                            <tr class="cat"><th><i class="minus"></i></th><th colspan="2">Общая информация</th></tr>
                            <tr><td></td><td><svg class="ico"><use href="#i-book"/></svg>Наименование</td><td></td></tr>
                            <tr><td></td><td><svg class="ico"><use href="#i-book"/></svg>Наименование1</td><td></td></tr>
                            <tr><td></td><td><svg class="ico"><use href="#i-book"/></svg>Наименование2</td><td></td></tr>
                            <tr><td></td><td><svg class="ico"><use href="#i-comment"/></svg>Комментарий</td><td>Imported</td></tr>
                            <tr><td></td><td><svg class="ico"><use href="#i-descr"/></svg>Описание</td><td></td></tr>
                            <tr class="cat"><th><i class="minus"></i></th><th colspan="2">Элементы уровни детализации</th></tr>
                            <tr><td></td><td><svg class="ico"><use href="#i-brick"/></svg>Элементов</td><td>1</td></tr>
                            <tr><td></td><td><svg class="ico"><use href="#i-level"/></svg>На уровень</td><td>0</td></tr>
                            <tr><td></td><td><svg class="ico"><use href="#i-level"/></svg>До уровня</td><td></td></tr>
                            <tr class="cat"><th><i class="minus"></i></th><th colspan="2">Адресная и контактная информация</th></tr>
                            <tr><td></td><td><svg class="ico"><use href="#i-binoc"/></svg><label for="indexed">Индексировать</label></td><td class="check"><input type="checkbox" id="indexed" checked></td></tr>
                            <tr><td></td><td><svg class="ico"><use href="#i-globe"/></svg></td><td></td></tr>
                        </tbody>
                    </table>
                    <div class="darkscroll"><i class="up"></i><i class="grip"></i><i class="down"></i></div>
                </div>
            </div>
            <div class="dock-tabs bottom">
                <div class="tabs-clip">
                    <button class="dtab on"><svg class="ico"><use href="#i-props"/></svg>Свойства объекта</button>
                    <button class="dtab"><svg class="ico"><use href="#i-flag"/></svg>Точки трека и маршрута</button>
                </div>
            </div>
        </section>
    </main>

    <div class="bottombar">
        <button aria-label="Поиск"><svg class="ico"><use href="#i-binoc"/></svg></button>
        <button aria-label="Список"><svg class="ico"><use href="#i-notes"/></svg></button>
        <button><svg class="ico"><use href="#i-graph"/></svg>Высота/Глубина трека</button>
    </div>

    <footer class="statusbar">
        <div class="progress">0%</div>
        <span class="st-ready">Готов</span>
        <span class="st-gap"></span>
        <span class="st-coord">59.921128 30.352536</span>
        <span class="st-scale">1 : 1900</span>
        <span class="st-level">No levels</span>
        <span class="key">CAPS</span>
        <span class="key on">NUM</span>
        <span class="key">SCRL</span>
        <span class="key last">INS</span>
    </footer>
    <div class="taskbar"></div>
</body>
</html>
```
FILE: styles.css
```css
* { box-sizing: border-box; }
body { margin: 0; height: 100vh; display: flex; flex-direction: column; overflow: hidden; background: #e6e6e6; color: #000; font-family: "DejaVu Sans Condensed", "Noto Sans", sans-serif; font-size: 11px; line-height: 16px; }
button { border: none; background: none; padding: 0; margin: 0; color: inherit; font: inherit; white-space: nowrap; cursor: pointer; }
h1, h2 { margin: 0; font-weight: normal; }
i { font-style: normal; }
.defs { position: absolute; width: 0; height: 0; }
.ico { width: 16px; height: 16px; flex: none; }

/* title */
.titlebar { flex: none; height: 24px; display: flex; align-items: center; padding: 0 3px 2px; background: linear-gradient(#4a4d57, #3c3f47 45%, #2d2f35 50%, #454850); border-bottom: 1px solid #25262b; }
.titlebar h1 { flex: 1; margin-left: 1px; color: #fff; font: 15px/20px "Noto Sans", sans-serif; white-space: nowrap; }
.window-buttons { display: flex; gap: 14px; margin-right: 4px; }
.window-buttons button { display: flex; }
.window-buttons svg { width: 10px; height: 10px; }

/* quick access */
.quickbar { flex: none; height: 31px; display: flex; background: linear-gradient(#4e515b, #43464e 40%, #35373d 45%, #4b4e57); border-bottom: 2px solid #25262b; padding-left: 5px; }
.quick-tools { height: 29px; display: flex; align-items: center; gap: 8px; padding: 0 0 0 7px; background: linear-gradient(#e4e6ea, #bcc0c8 40%, #eceef0); }
.quick-tools button { display: flex; }
.quick-tools .quick-more { margin-left: 10px; }
.quick-curve { width: 30px; height: 29px; }

/* ribbon */
.ribbon-tabs { flex: none; height: 27px; display: flex; align-items: flex-end; background: #535353; padding-left: 9px; font: 12px/20px Roboto, "Noto Sans", sans-serif; color: #fff; }
.app-button { width: 56px; height: 23px; display: flex; align-items: center; justify-content: center; border-radius: 3px 3px 0 0; background: linear-gradient(#fdeccb, #fbd08a 45%, #f7a92c 50%, #fdeaa8); }
.tab { height: 25px; padding: 2px 10px 0; margin-right: 4px; }
.tab.active { margin: 0 6px 0 8px; border-radius: 4px 4px 0 0; background: linear-gradient(#fbfbfd, #dfe2e8); color: #222; }
.ribbon-right { margin-left: auto; display: flex; gap: 7px; padding-right: 4px; align-self: center; }
.ribbon-right button { display: flex; }
.ribbon { flex: none; height: 99px; display: flex; gap: 3px; margin-right: 1px; padding: 1px 3px; border: 1px solid #fafafc; border-radius: 4px; background: linear-gradient(#dfe2e8, #d0d4dc 16%, #b4b9c4 20%, #dfe4ea 80%, #f2f5f8); color: #2b2b38; font: 12px/16px Roboto, "Noto Sans", sans-serif; }
.group { height: 94px; display: flex; flex-direction: column; border: 1px solid #9a9da3; border-radius: 3px; background: linear-gradient(#d8dbe2, #cdd1d9 20%, #b6bcc7 24%, #e4edf1 80%); overflow: hidden; }
.g-file { width: 428px; }
.g-props { width: 85px; }
.g-clip { width: 98px; }
.g-zoom { width: 225px; }
.g-main { width: 390px; }
.group-body { height: 74px; display: flex; padding: 1px 2px; }
.group-name { flex: 1; text-align: center; color: #fff; line-height: 18px; background: linear-gradient(#aeaeae, #989898); white-space: nowrap; }
.col { display: flex; flex-direction: column; align-items: flex-start; padding-left: 4px; }
.col button { height: 24px; display: flex; align-items: center; gap: 3px; }
.col button:disabled { color: #9c9ea6; }
.col.two { padding-top: 8px; gap: 8px; }
.c-new { width: 79px; }
.c-save { width: 118px; }
.c-zoom { width: 145px; }
.c-move { width: 125px; padding-left: 0; }
.c-move button { padding: 0 4px; border: 1px solid transparent; }
.c-move .pressed { border-color: #f0a040; background: linear-gradient(#f9c590, #f6b26a 45%, #f5a650 50%, #fde08c); }
.c-edit { width: 136px; padding-left: 2px; }
.big { display: flex; flex-direction: column; align-items: center; height: 72px; padding-top: 5px; }
.big svg { width: 32px; height: 32px; margin-bottom: 4px; flex: none; }
.big > .caret { margin-top: 5px; }
.second { display: flex; align-items: center; gap: 5px; line-height: 14px; }
.w68 { width: 68px; }
.w72 { width: 72px; }
.w84 { width: 84px; }
.w120 { width: 120px; }
.caret { border: 3px solid transparent; border-top-color: #666a78; border-bottom: 0; }

/* workspace */
.workspace { flex: 1; min-height: 0; display: flex; padding-top: 1px; border-top: 1px solid #8c8c8c; }
.rail { width: 28px; padding-top: 7px; display: flex; flex-direction: column; align-items: center; gap: 11px; background: linear-gradient(90deg, #5e5e5e, #8a8a8a); border-radius: 0 4px 4px 0; border-right: 1px solid #666; color: #fff; }
.rail button { display: flex; flex-direction: column; align-items: center; gap: 8px; }
.rail span { writing-mode: vertical-rl; line-height: 14px; }
.dock { display: flex; flex-direction: column; border: 1px solid #999; background: #e6e6e6; }
.dock-left { width: 275px; margin-left: 1px; }
.dock-right { width: 334px; }
.dock-head { flex: none; height: 26px; display: flex; align-items: center; padding: 0 8px 0 4px; gap: 12px; background: linear-gradient(#8f9197, #7d7f85 50%, #94969b); color: #e4e6ea; }
.dock-head h2 { flex: 1; font-size: 11px; margin-left: -9px; }
.dock-head button { display: flex; }
.dock-head svg { width: 12px; height: 12px; }
.dock-head > svg { width: 16px; height: 16px; }
.dock-tabs { flex: none; height: 26px; display: flex; padding: 2px 3px 0 4px; }
.tabs-clip { display: flex; gap: 2px; overflow: hidden; min-width: 0; flex: none; }
.dock-left .tabs-clip { width: 232px; }
.dock-right .tabs-clip { width: 290px; }
.dtab { display: flex; align-items: center; gap: 4px; padding: 0 4px 0 5px; flex: none; height: 24px; border: 1px solid #8a8a8a; border-bottom: none; border-radius: 4px 4px 0 0; background: linear-gradient(#888, #6a6a6a 45%, #4c4c4c 50%, #777); color: #f2f2f2; }
.dtab.on { background: linear-gradient(#f4f4f4, #e6e6e6); color: #222; }
.arrow { width: 18px; height: 12px; display: flex; justify-content: center; align-items: center; }
.arrow::before { content: ""; border: 4px solid transparent; border-right-color: #b4b4b4; border-left: 0; }
.arrow.next::before { border: 4px solid transparent; border-left-color: #222; border-right: 0; }
.dock-page { flex: 1; min-height: 0; display: flex; flex-direction: column; margin: 0 5px 0 3px; border: 1px solid #a6a6a6; padding: 1px 5px 1px 1px; box-shadow: 1px 0 0 #fff, 3px 0 0 #a6a6a6; }
.dock-tabs.bottom { height: 36px; padding: 0 3px 8px 6px; }
.bottom .dtab { gap: 3px; padding: 1px 3px 0 5px; border: 1px solid #8a8a8a; border-top: none; border-radius: 0 0 4px 4px; height: 28px; }
.bottom .arrow { margin-top: 14px; }
.dock-left .bottom .tabs-clip { width: 229px; gap: 1px; }

/* tree */
.tree { flex: 1; background: #fff; border: 1px solid #777; padding: 2px 0 0 9px; font: 11px/16px "Noto Sans", sans-serif; }
.tree-root { display: flex; align-items: center; gap: 5px; height: 16px; }
.tree-root .ico { margin-left: 2px; }
.expander { width: 6px; height: 6px; background: linear-gradient(135deg, transparent 50%, #333 50%); }
.tree ul { list-style: none; margin: 0 0 0 21px; padding: 0; }
.tree li { height: 16px; display: flex; align-items: center; position: relative; padding-left: 12px; white-space: nowrap; }
.tree li::before { content: ""; width: 11px; height: 16px; position: absolute; left: 0; top: 0; border-left: 1px dotted #888; background: repeating-linear-gradient(90deg, #999 0 1px, transparent 1px 2px) 0 8px / 11px 1px no-repeat; }
.tree li:last-child::before { height: 9px; }
.tree .ico { margin-right: 4px; }
.tree-root .ico { margin-right: 0; }
.red { fill: #f4481c; }
.gold { fill: #c8900c; }
.green { fill: #12d42c; }
.ball { border-radius: 50%; background: radial-gradient(circle at 35% 30%, #2fc42f, #0a8a0a 60%, #045404); }
.b12 { width: 12px; height: 12px; margin: 0 6px 0 2px; }
.b10 { width: 10px; height: 10px; margin: 0 7px 0 3px; }
.b6 { width: 6px; height: 6px; margin: 0 9px 0 5px; }
.b4 { width: 4px; height: 4px; margin: 0 10px 0 6px; background: #0a980a; }

/* map */
.center { flex: 1; min-width: 0; display: flex; flex-direction: column; background: #f0f0f0; margin-left: 1px; }
.doc-tabs { flex: none; height: 18px; display: flex; border-bottom: 1px solid #3d6098; }
.doc-tabs svg { width: 20px; height: 18px; }
.doc-tabs button { padding: 1px 3px 0; background: #f4f6f8; border: 1px solid #3d6098; border-left: none; border-bottom: none; border-radius: 0 3px 0 0; }
.map-row { flex: 1; min-height: 0; display: flex; border-bottom: 1px solid #aaa; }
.map { flex: 1; min-width: 0; height: 100%; background: #eff8ff; }
.map-bearing { font: 13px "Liberation Sans", sans-serif; fill: #f0142c; }
.map-scale { font: bold 7px "Liberation Sans", sans-serif; }
.map-limit { font: bold 8px "Liberation Sans", sans-serif; }
.stop { font: bold 5px "Liberation Sans", sans-serif; fill: #fff; }
.vscroll { width: 17px; flex: none; background: #f0f0f0; display: flex; flex-direction: column; align-items: center; padding: 6px 0; }
.vscroll .up, .vscroll .down, .hscroll .left, .hscroll .right { width: 6px; height: 6px; border: solid #555; border-width: 2px 0 0 2px; transform: rotate(45deg); flex: none; }
.vscroll .down { transform: rotate(225deg); margin-top: auto; }
.vthumb { width: 15px; height: 17px; background: #cdcdcd; margin-top: 212px; }
.hscroll { flex: none; height: 17px; display: flex; align-items: center; padding: 0 7px; }
.hscroll .left { transform: rotate(-45deg); }
.hscroll .right { transform: rotate(135deg); margin-left: auto; }
.hthumb { width: 17px; height: 15px; background: #cdcdcd; margin-left: 268px; }

/* object properties */
.toolbar { flex: none; height: 24px; display: flex; align-items: center; gap: 7px; padding-bottom: 4px; }
.toolbar button { display: flex; }
.toolbar .sep { width: 1px; height: 18px; background: #999; }
.search { display: flex; align-items: center; width: 158px; height: 20px; border: 1px solid #999; background: #fff; padding-left: 1px; }
.search input { flex: 1; min-width: 0; border: none; outline: none; padding: 0 2px; font: inherit; background: none; }
.search input::placeholder { color: #444c66; opacity: 1; }
.sort { margin-left: -5px; }
.sort svg { width: 24px; height: 16px; }
.types { flex: none; height: 135px; display: flex; overflow: hidden; border: 2px solid #777; background: #fff; }
.types table { border-collapse: collapse; table-layout: fixed; width: 294px; height: 143px; }
.k1 { width: 94px; }
.k2 { width: 98px; }
.types th { height: 24px; padding: 0 4px; text-align: left; font-weight: normal; border-right: 1px solid #dfe9f6; }
.types th:last-child { border: none; }
.types td { height: 17px; padding: 0 4px; line-height: 16px; border-right: 1px solid #eee; border-bottom: 1px solid #eee; white-space: nowrap; overflow: hidden; }
.types td .ico { vertical-align: top; margin-right: 1px; }
.types .selected td { background: #cfe5fc; border-bottom-color: #7aaade; border-top: 1px solid #7aaade; }
.types .selected td:last-child { background: none; border-color: #eee; }
.types .vscroll { width: 16px; }
.types .vthumb { margin-top: 53px; }
.splitter { flex: none; height: 8px; display: flex; justify-content: center; background: #c4c4c4; }
.splitter span { width: 125px; background: #f4f4f4; border: 1px solid #aaa; border-top: none; display: flex; align-items: center; justify-content: space-between; padding: 0 5px; }
.splitter span::before, .splitter span::after { content: ""; border: 3px solid transparent; border-bottom-color: #3098f0; border-top: none; }
.splitter i { width: 95px; border-top: 1px dotted #3098f0; }
.props { flex: 1; min-height: 0; display: flex; overflow: hidden; border: 1px solid #888; background: #f8f8f8; }
.props table { flex: 1; border-collapse: collapse; table-layout: fixed; width: 294px; height: 285px; }
.p1 { width: 14px; }
.p2 { width: 124px; }
.props td, .props th { height: 19px; padding: 0; line-height: 18px; white-space: nowrap; overflow: hidden; text-align: left; }
.props th { background: #f8f8f8; border-bottom: 1px solid #b0b0b0; color: #2c2c34; }
.props .cat th { border-top: 1px solid #b0b0b0; }
.props .cat th:first-child { border-bottom-color: #f8f8f8; padding-left: 3px; }
.props th:last-child { padding-left: 19px; }
.props td:nth-child(2) { padding-left: 13px; background: #e4e8f3; border: solid #c8d0e0; border-width: 1px 1px 1px 0; }
.props td:nth-child(3) { padding-left: 1px; background: #e5e5e5; border: solid #c8d0e0; border-width: 1px 0; color: #333; }
.props td .ico { vertical-align: top; margin: 1px 2px 0 0; }
.props td.check { text-align: center; }
.check input { appearance: none; width: 12px; height: 12px; margin: 0; vertical-align: middle; border: 1px solid #888; background: #fff; }
.check input:checked::after { content: ""; display: block; width: 4px; height: 7px; margin: 0 auto; border: solid #2c62b0; border-width: 0 2px 2px 0; transform: rotate(40deg); }
.minus { display: block; width: 9px; height: 9px; border: 1px solid #8088a8; border-radius: 2px; background: linear-gradient(#6070a0, #6070a0) center / 5px 1px no-repeat, #e8ebf4; }
.darkscroll { width: 17px; flex: none; background: #484848; display: flex; flex-direction: column; align-items: center; padding: 5px 0; }
.darkscroll .up, .darkscroll .down { border: 5px solid transparent; border-bottom-color: #ddd; border-top: none; margin-bottom: 6px; }
.darkscroll .down { border: 5px solid transparent; border-top-color: #ddd; border-bottom: none; margin: auto 0 0; }
.grip { width: 15px; height: 94px; border-radius: 2px; background: repeating-linear-gradient(#666 0 1px, transparent 1px 3px) center / 9px 7px no-repeat, linear-gradient(90deg, #f4f4f4, #c4c4c8); }

/* bottom */
.bottombar { flex: none; height: 28px; display: flex; align-items: center; gap: 8px; margin: 0 1px; padding-left: 6px; border-radius: 4px 4px 0 0; background: linear-gradient(#6e6e6e, #8c8c8c); color: #fff; }
.bottombar button { display: flex; align-items: center; gap: 7px; }
.statusbar { flex: none; height: 22px; display: flex; align-items: center; padding-left: 3px; color: #fff; background: linear-gradient(#4c505b, #3b3e46 40%, #24262a 45%, #303238); }
.progress { width: 179px; height: 17px; line-height: 14px; text-align: center; border: 2px solid #bcbcbc; background: linear-gradient(#fff, #e4e4e4 50%, #fafafa); color: #3c8ef0; }
.statusbar span { height: 20px; line-height: 24px; padding-left: 5px; border-left: 1px solid #6a6d74; white-space: nowrap; }
.statusbar .st-ready { width: 183px; }
.statusbar .st-gap { width: 53px; }
.statusbar .st-coord { width: 153px; }
.statusbar .st-scale { width: 105px; }
.statusbar .st-level { flex: 1; }
.statusbar .key { padding-right: 5px; color: #8e9096; }
.statusbar .key.on { color: #fff; }
.statusbar .last { border-right: 1px solid #6a6d74; margin-right: 165px; }
.taskbar { flex: none; height: 2px; background: linear-gradient(90deg, #6b5f58 0 140px, #b4aca4 140px 380px, #6b5f58 380px); }
```
